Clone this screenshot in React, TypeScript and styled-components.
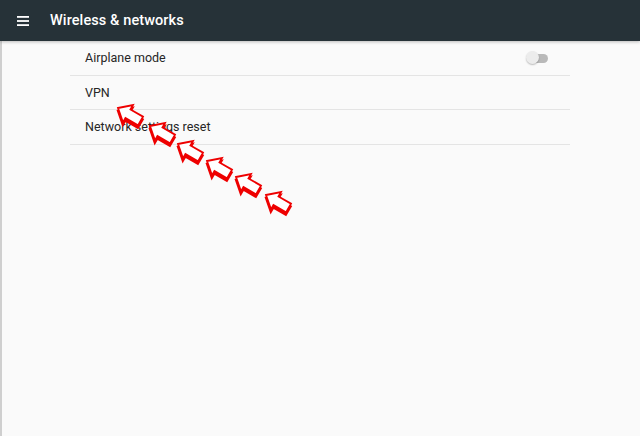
import React from "react";
import styled, { createGlobalStyle } from "styled-components";

const Global = createGlobalStyle`
  html, body { margin: 0; padding: 0; }
  body { background: #fafafa; font-family: Roboto, "Noto Sans", Arial, sans-serif; }
`;

const Page = styled.div`
  position: relative;
  width: 640px;
  height: 436px;
  background: #fafafa;
  overflow: hidden;
`;

const Toolbar = styled.header`
  height: 41px;
  background: #263238;
  display: flex;
  align-items: center;
  box-shadow: 0 1px 3px rgba(0, 0, 0, 0.25);
  position: relative;
  z-index: 1;
`;

const MenuButton = styled.div`
  width: 50px;
  display: flex;
  justify-content: center;
  padding-right: 4px;
  box-sizing: border-box;
`;

const Title = styled.h1`
  margin: 0;
  font-size: 14.5px;
  font-weight: 500;
  color: #ffffff;
  letter-spacing: 0.1px;
`;

const Body = styled.main`
  height: 395px;
  border-left: 2px solid #cfcfcf;
  box-sizing: border-box;
  display: flex;
  justify-content: center;
`;

const List = styled.div`
  width: 500px;
  margin-left: -2px;
`;

const Row = styled.div`
  height: 33.5px;
  border-bottom: 1px solid #e4e4e4;
  display: flex;
  align-items: center;
  justify-content: space-between;
  padding: 0 22px 0 15px;
  font-size: 12.5px;
  color: #262626;
`;

const Track = styled.div`
  position: relative;
  width: 18px;
  height: 9px;
  border-radius: 5px;
  background: #b9b9b9;
  margin-top: 1px;
`;

const Thumb = styled.div`
  position: absolute;
  left: -4px;
  top: -3px;
  width: 13px;
  height: 13px;
  border-radius: 50%;
  background: #ececec;
  box-shadow: 0 1px 1.5px rgba(0, 0, 0, 0.25);
`;

const Overlay = styled.svg`
  position: absolute;
  left: 0;
  top: 0;
  pointer-events: none;
`;

const tips: [number, number][] = [
  [118, 108],
  [150, 126],
  [178, 144],
  [207, 161],
  [236, 177],
  [266, 195],
];

const arrowPath =
  "M0 0 L11.5 -10 L11.5 -5 L26 -5 L26 5 L11.5 5 L11.5 10 Z";

const Arrow = ({ x, y }: { x: number; y: number }) => (
  <g transform={`translate(${x} ${y}) rotate(30)`}>
    <path d={arrowPath} transform="translate(1.2 2.4)" fill="#ee0000" stroke="#ee0000" strokeWidth={2} strokeLinejoin="miter" />
    <path d={arrowPath} fill="#ffffff" stroke="#ee0000" strokeWidth={1.8} strokeLinejoin="miter" />
  </g>
);

export default function App() {
  return (
    <Page>
      <Global />
      <Toolbar>
        <MenuButton>
          <svg width="14" height="12" viewBox="0 0 14 12">
            <rect x="1" y="1" width="12" height="1.8" fill="#fff" />
            <rect x="1" y="5.1" width="12" height="1.8" fill="#fff" />
            <rect x="1" y="9.2" width="12" height="1.8" fill="#fff" />
          </svg>
        </MenuButton>
        <Title>Wireless &amp; networks</Title>
      </Toolbar>
      <Body>
        <List>
          <Row>
            <span>Airplane mode</span>
            <Track>
              <Thumb />
            </Track>
          </Row>
          <Row>
            <span>VPN</span>
          </Row>
          <Row>
            <span>Network settings reset</span>
          </Row>
        </List>
      </Body>
      <Overlay width="640" height="436" viewBox="0 0 640 436">
        {tips.map(([x, y], i) => (
          <Arrow key={i} x={x} y={y} />
        ))}
      </Overlay>
    </Page>
  );
}
